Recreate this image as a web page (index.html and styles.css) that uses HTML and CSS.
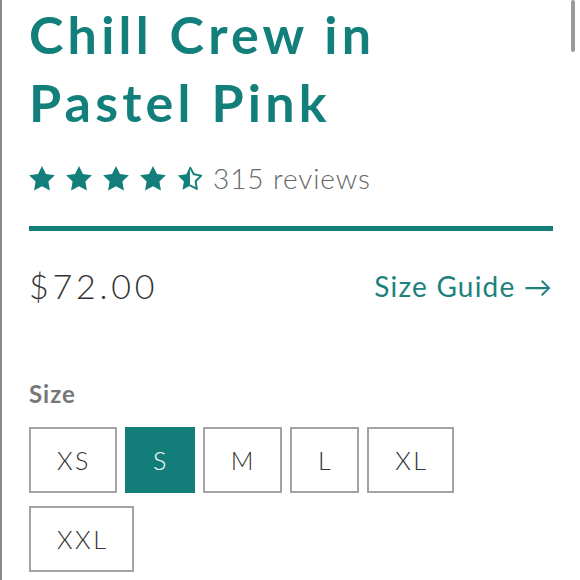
FILE: index.html
```html
<!DOCTYPE html>
<html lang="en">
<head>
<meta charset="utf-8">
<title>Chill Crew in Pastel Pink</title>
<link rel="stylesheet" href="styles.css">
</head>
<body>
<div class="edge"></div>
<div class="scroll-thumb"></div>
<main class="product">
  <h1 class="title">Chill Crew in Pastel Pink</h1>
  <div class="rating">
    <div class="stars">
      <svg class="star" viewBox="2 2 20 19.5"><polygon points="12,2 15.09,8.26 22,9.27 17,14.14 18.18,21.02 12,17.77 5.82,21.02 7,14.14 2,9.27 8.91,8.26"/></svg>
      <svg class="star" viewBox="2 2 20 19.5"><polygon points="12,2 15.09,8.26 22,9.27 17,14.14 18.18,21.02 12,17.77 5.82,21.02 7,14.14 2,9.27 8.91,8.26"/></svg>
      <svg class="star" viewBox="2 2 20 19.5"><polygon points="12,2 15.09,8.26 22,9.27 17,14.14 18.18,21.02 12,17.77 5.82,21.02 7,14.14 2,9.27 8.91,8.26"/></svg>
      <svg class="star" viewBox="2 2 20 19.5"><polygon points="12,2 15.09,8.26 22,9.27 17,14.14 18.18,21.02 12,17.77 5.82,21.02 7,14.14 2,9.27 8.91,8.26"/></svg>
      <svg class="star half" viewBox="1.5 1.5 21 20.5">
        <polygon class="half-fill" points="12,2 12,17.77 5.82,21.02 7,14.14 2,9.27 8.91,8.26"/>
        <polyline class="half-outline" points="12,2.6 15.09,8.26 21.2,9.4 16.6,14 17.6,20.3 12,17.4"/>
      </svg>
    </div>
    <span class="reviews">315 reviews</span>
  </div>
  <hr class="rule">
  <div class="price-row">
    <span class="price">$72.00</span>
    <a class="size-guide" href="#">Size Guide →</a>
  </div>
  <div class="size-label">Size</div>
  <div class="sizes">
    <button class="size">XS</button>
    <button class="size selected">S</button>
    <button class="size">M</button>
    <button class="size">L</button>
    <button class="size">XL</button>
    <button class="size">XXL</button>
  </div>
</main>
</body>
</html>
```
FILE: styles.css
```css
html, body {
  margin: 0;
  padding: 0;
  background: #fff;
  height: 100%;
  overflow: hidden;
}
body {
  font-family: "Lato", "Liberation Sans", sans-serif;
  color: #333;
  position: relative;
}
.edge {
  position: absolute;
  left: 0;
  top: 0;
  width: 2px;
  height: 100%;
  background: #8a8a8a;
}
.scroll-thumb {
  position: absolute;
  right: 5px;
  top: 0;
  width: 4px;
  height: 52px;
  background: #9a9a9a;
  border-radius: 2px;
}
.product {
  padding: 0 28px 0 29px;
  width: 523px;
}
.title {
  margin: 0;
  max-width: 420px;
  font-size: 52px;
  line-height: 68px;
  font-weight: 700;
  color: #137f7b;
  letter-spacing: 4.2px;
}
.rating {
  display: flex;
  align-items: center;
  margin-top: 29px;
  height: 26px;
}
.stars {
  display: flex;
  gap: 11px;
}
.star {
  width: 26px;
  height: 25px;
  fill: #137f7b;
}
.star.half .half-outline {
  fill: none;
  stroke: #137f7b;
  stroke-width: 1.6;
  stroke-linejoin: round;
}
.reviews {
  margin-left: 10px;
  font-size: 28px;
  font-weight: 300;
  color: #666;
  letter-spacing: 0.9px;
}
.rule {
  margin: 35px 0 0;
  border: 0;
  height: 5px;
  background: #137f7b;
  width: 524px;
}
.price-row {
  display: flex;
  justify-content: space-between;
  align-items: center;
  margin-top: 34px;
}
.price {
  font-size: 34px;
  font-weight: 300;
  letter-spacing: 3.8px;
  color: #333;
}
.size-guide {
  font-size: 28px;
  font-weight: 400;
  color: #1d827e;
  text-decoration: none;
  letter-spacing: 1.2px;
  margin-right: -1px;
}
.size-label {
  margin-top: 73px;
  font-size: 24px;
  font-weight: 700;
  color: #777;
  letter-spacing: 1px;
}
.sizes {
  display: flex;
  flex-wrap: wrap;
  gap: 13px 8px;
  margin-top: 19px;
  width: 440px;
}
.size {
  height: 66px;
  padding: 0 24px 0 26px;
  border: 2px solid #a3a3a3;
  background: #fff;
  font-family: "Lato", "Liberation Sans", sans-serif;
  font-size: 25px;
  font-weight: 300;
  color: #333;
  letter-spacing: 2.5px;
}
.size.selected {
  background: #137e79;
  border-color: #137e79;
  color: #fff;
}
```
